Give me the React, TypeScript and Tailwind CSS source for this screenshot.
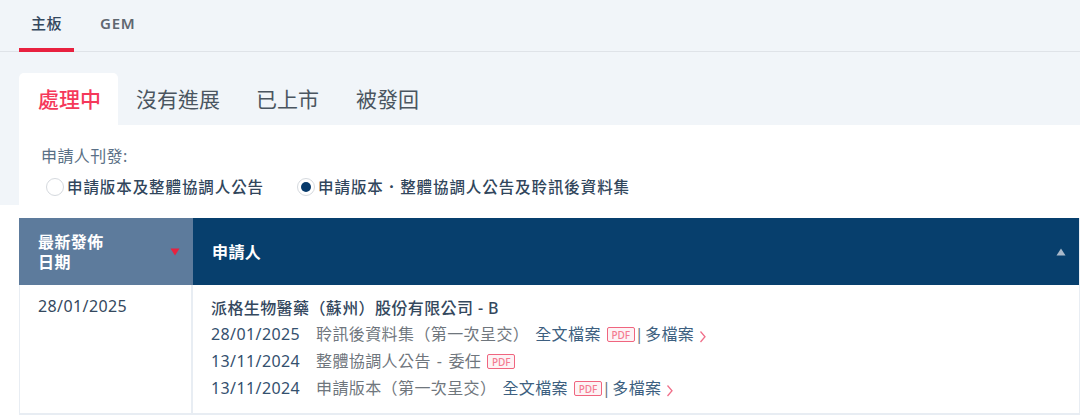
const FONT = "font-['Noto_Sans','Noto_Sans_CJK_TC',sans-serif]";

const PdfBadge = () => (
  <span className="ml-[6px] inline-flex h-[15px] w-[28px] items-center justify-center rounded-[2px] border-[1.5px] border-[#f0657f] bg-[#fdf3f5] text-[10px] leading-none font-medium tracking-normal text-[#f4798f]">
    PDF
  </span>
);

const Chevron = () => (
  <svg className="ml-[5px] mt-[3px]" width="8" height="13" viewBox="0 0 8 13" fill="none">
    <path d="M1.5 1.5 L6 6.7 L1.5 12" stroke="#f0708a" strokeWidth="1.3" />
  </svg>
);

const filings = [
  { date: '28/01/2025', title: '聆訊後資料集（第一次呈交）', multi: true },
  { date: '13/11/2024', title: '整體協調人公告 - 委任', multi: false },
  { date: '13/11/2024', title: '申請版本（第一次呈交）', multi: true },
];

export default function App() {
  return (
    <div lang="zh-Hant" className={`${FONT} h-[415px] w-[1080px] overflow-hidden bg-white tracking-[0.4px]`}>
      <div className="h-[205px] bg-[#f1f5f9]">
        {/* board tabs */}
        <div className="flex h-[52px] border-b border-[#dfe3e8] pl-[19px]">
          <div className="h-[52px] w-[55px] border-b-[4px] border-[#e8213f] pt-[12px] pl-[12px] text-[15px] leading-[22px] font-medium text-[#34485e]">
            主板
          </div>
          <div className="ml-[26px] pt-[12px] text-[15px] leading-[22px] font-semibold tracking-[0.8px] text-[#5f6770]">GEM</div>
        </div>

        {/* status tabs */}
        <div className="mt-[21px] flex h-[52px] pl-[19px] text-[21px] leading-[52px] tracking-normal text-[#4a5560]">
          <div className="w-[99px] rounded-t-[5px] bg-white pl-[19px] font-medium text-[#f5385a]">處理中</div>
          <div className="ml-[18px]">沒有進展</div>
          <div className="ml-[36px]">已上市</div>
          <div className="ml-[37px]">被發回</div>
        </div>

        <div className="ml-[19px] h-[80px] bg-white pl-[22px] pt-[20px]">
          <div className="text-[16px] leading-[22px] text-[#5a7086]">申請人刊發:</div>
          <div className="mt-[9px] flex items-center text-[15.5px] leading-[22px] font-medium tracking-[0.92px] text-[#31465c]">
            <span className="ml-[5px] h-[18px] w-[18px] rounded-full border border-[#d5d9de] bg-white" />
            <span className="ml-[3px]">申請版本及整體協調人公告</span>
            <span className="ml-[33px] flex h-[18px] w-[18px] items-center justify-center rounded-full border border-[#d5d9de] bg-white">
              <span className="h-[10px] w-[10px] rounded-full bg-[#06396a]" />
            </span>
            <span className="ml-[3px]">申請版本．整體協調人公告及聆訊後資料集</span>
          </div>
        </div>
      </div>

      {/* listing table */}
      <div className="mt-[13px] ml-[19px] border-r border-b-[2px] border-l border-[#e8edf3]">
        <div className="-ml-px flex h-[67px] text-[16px] leading-[20px] font-semibold text-white">
          <div className="flex w-[174px] items-center bg-[#5d7b9c] pl-[19px]">
            <div className="w-[132px]">
              最新發佈
              <br />
              日期
            </div>
            <svg width="10" height="8" viewBox="0 0 10 8">
              <path d="M0.5 0.5 H9.5 L5 7.5 Z" fill="#e8213f" />
            </svg>
          </div>
          <div className="flex flex-1 items-center justify-between bg-[#073f6d] pr-[13px] pl-[19px]">
            <span>申請人</span>
            <svg width="10" height="8" viewBox="0 0 10 8">
              <path d="M5 0.5 L9.5 7.5 H0.5 Z" fill="#a9b9ca" />
            </svg>
          </div>
        </div>

        <div className="flex h-[128px]">
          <div className="w-[173px] border-r-[2px] border-[#e8edf3] pt-[10px] pl-[18px] text-[16px] leading-[22px] text-[#34485e]">
            28/01/2025
          </div>
          <div className="flex-1 pt-[11px] pl-[18px] text-[16px] leading-[27px]">
            <div className="h-[25px] leading-[24px] font-medium text-[#34485e]">派格生物醫藥（蘇州）股份有限公司 - B</div>
            {filings.map((f, i) => (
              <div key={i} className="flex h-[27px] items-center text-[#3d5f80]">
                <span className="w-[105px] text-[#34506e]">{f.date}</span>
                <span className="text-[#6f767d] [word-spacing:1.5px]">{f.title}</span>
                {f.multi && <span className="ml-[6px]">全文檔案</span>}
                <PdfBadge />
                {f.multi && (
                  <>
                    <span className="text-[#6a747e]">|</span>
                    <span className="ml-[1px]">多檔案</span>
                    <Chevron />
                  </>
                )}
              </div>
            ))}
          </div>
        </div>
      </div>
    </div>
  );
}
